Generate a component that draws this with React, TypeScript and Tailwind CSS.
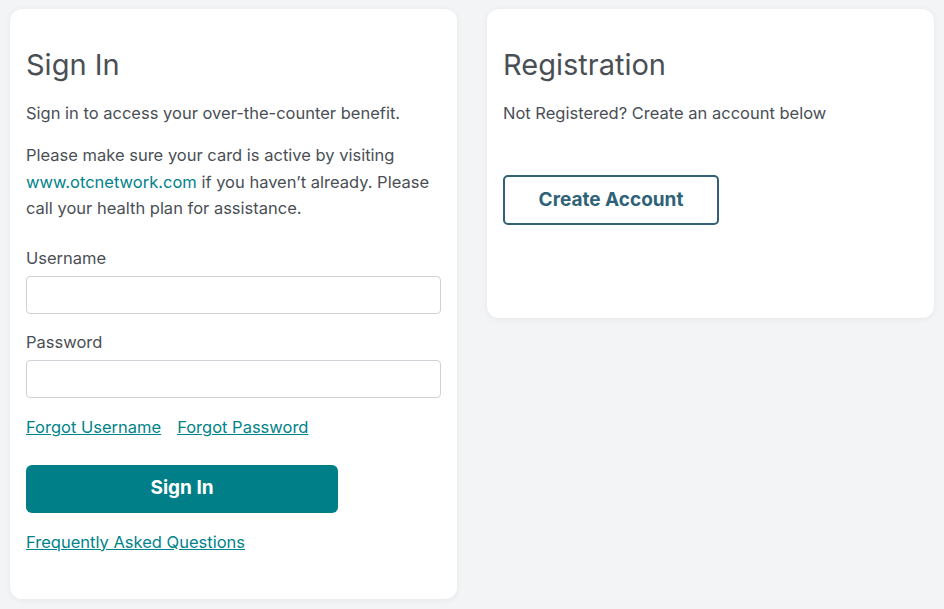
import { useState } from 'react'

const font = { fontFamily: 'Inter, "Noto Sans", sans-serif' }

const Field = ({ label, type }: { label: string; type: string }) => {
    const [value, setValue] = useState('')
    return (
        <div>
            <label className="block text-[16.5px] leading-[26px] text-[#4a4f55]">{label}</label>
            <input
                type={type}
                value={value}
                onChange={(e) => setValue(e.target.value)}
                className="mt-[5px] block h-[38px] w-full rounded-[4px] border border-[#cfd2d6] bg-white px-3 outline-none"
            />
        </div>
    )
}

export default function App() {
    return (
        <div className="min-h-[609px] w-full bg-[#f3f4f6] px-[10px] pt-[9px] text-[#4a4f55]" style={font}>
            <div className="flex items-start gap-[30px]">
                {/* sign in */}
                <div className="w-[447px] rounded-[12px] bg-white px-4 pt-[38px] pb-[44px] shadow-[0_1px_6px_rgba(0,0,0,0.06)]">
                    <h1 className="text-[29px] leading-[36px] text-[#4a4f55]">Sign In</h1>
                    <p className="mt-[17px] text-[16.5px] leading-[26px]">Sign in to access your over-the-counter benefit.</p>
                    <p className="mt-4 text-[16.5px] leading-[26.5px]">
                        Please make sure your card is active by visiting{' '}
                        <a href="#" className="text-[#00838b]">www.otcnetwork.com</a> if you haven’t already. Please call your health plan for assistance.
                    </p>
                    <div className="mt-[23px] flex flex-col gap-[15px]">
                        <Field label="Username" type="text" />
                        <Field label="Password" type="password" />
                    </div>
                    <div className="mt-4 flex gap-4 text-[16.5px] leading-[26px]">
                        <a href="#" className="text-[#00838b] underline">Forgot Username</a>
                        <a href="#" className="text-[#00838b] underline">Forgot Password</a>
                    </div>
                    <button className="mt-[25px] h-[48px] w-[312px] rounded-[6px] bg-[#017f88] text-[19px] font-bold text-white">
                        Sign In
                    </button>
                    <div className="mt-4 text-[16.5px] leading-[26px]">
                        <a href="#" className="text-[#00838b] underline">Frequently Asked Questions</a>
                    </div>
                </div>

                {/* registration */}
                <div className="w-[447px] rounded-[12px] bg-white px-4 pt-[38px] pb-[93px] shadow-[0_1px_6px_rgba(0,0,0,0.06)]">
                    <h1 className="text-[29px] leading-[36px] text-[#4a4f55]">Registration</h1>
                    <p className="mt-[17px] text-[16.5px] leading-[26px]">Not Registered? Create an account below</p>
                    <button className="mt-[49px] h-[50px] w-[216px] rounded-[5px] border-2 border-[#2f6278] bg-white text-[19px] font-bold text-[#2f6278]">
                        Create Account
                    </button>
                </div>
            </div>
        </div>
    )
}
